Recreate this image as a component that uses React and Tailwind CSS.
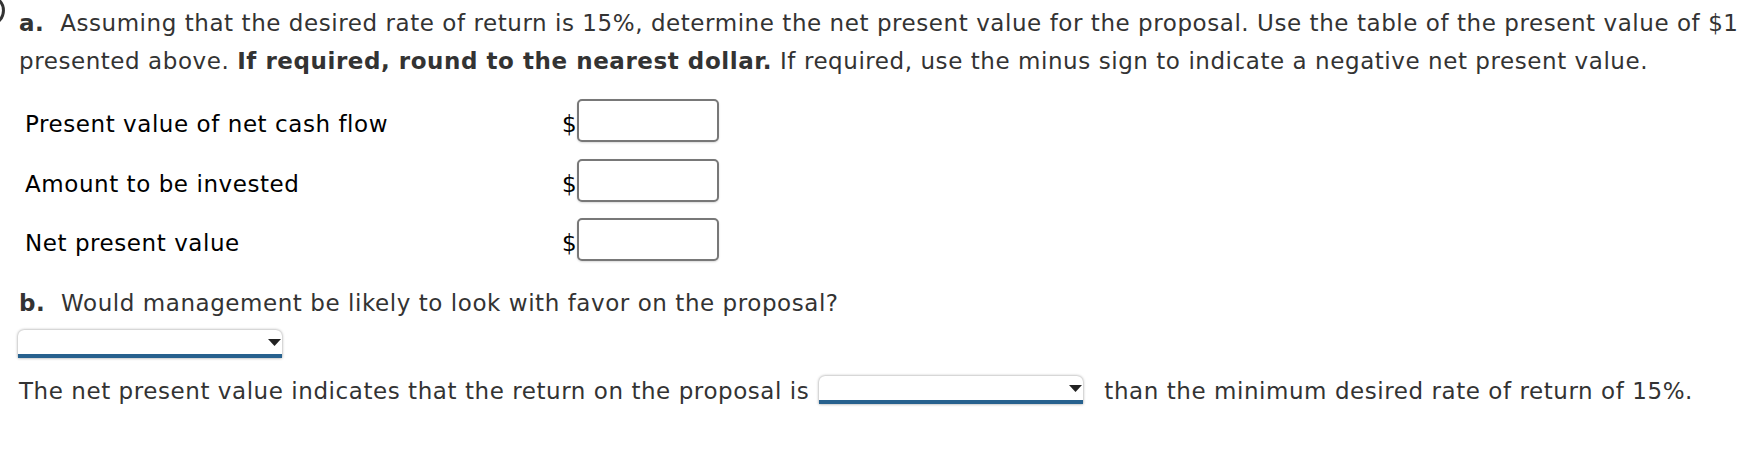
import React from 'react';

const Select = ({ className = '' }) => (
    <div className={`relative w-[264px] h-[28px] bg-white rounded-t-[6px] border-b-4 border-[#27618e] shadow-[0_0_3px_rgba(0,0,0,0.45)] ${className}`}>
        {/* dropdown caret */}
        <svg className="absolute right-[1px] top-[9px]" width="13" height="7" viewBox="0 0 13 7">
            <path d="M0 0 L13 0 L6.5 7 Z" fill="#222" />
        </svg>
    </div>
);

const AmountRow = ({ label }) => (
    <div className="flex items-center h-[43px]">
        <span className="w-[543px] pl-[6px] pt-[8px] text-black">{label}</span>
        <span className="pt-[8px] text-black">$</span>
        <div className="w-[142px] h-[43px] border-2 border-[#787878] rounded-[5px] bg-white shadow-[0_1px_2px_rgba(0,0,0,0.15)]"></div>
    </div>
);

export default function App() {
    return (
        <div className="relative w-[1762px] h-[466px] bg-white overflow-hidden font-['DejaVu_Sans','Liberation_Sans',sans-serif] text-[23px] tracking-[0.56px] text-[#333]">
            {/* edge of the question marker */}
            <svg className="absolute left-0 top-0" width="8" height="28" viewBox="0 0 8 28">
                <path d="M-9 -3 A 12 13 0 0 1 -9 24" fill="none" stroke="#333" strokeWidth="3" />
            </svg>

            <div className="pl-[19px] pr-[10px] pt-[4px]">
                {/* Part a */}
                <p className="leading-[38px]">
                    <b className="font-bold">a.</b>&nbsp; Assuming that the desired rate of return is 15%, determine the net present value for the proposal. Use the table of the present value of $1 presented above. <b className="font-bold">If required, round to the nearest dollar.</b> If required, use the minus sign to indicate a negative net present value.
                </p>

                <div className="mt-[19px] flex flex-col gap-[16.5px]">
                    <AmountRow label="Present value of net cash flow" />
                    <AmountRow label="Amount to be invested" />
                    <AmountRow label="Net present value" />
                </div>

                {/* Part b */}
                <p className="mt-[22px] leading-[40px]">
                    <b className="font-bold">b.</b>&nbsp; Would management be likely to look with favor on the proposal?
                </p>

                <Select className="mt-[7px] -ml-[1px]" />

                <div className="mt-[13px] flex items-start">
                    <span className="leading-[40px]">The net present value indicates that the return on the proposal is</span>
                    <Select className="mt-[5px] ml-[10px] shrink-0" />
                    <span className="leading-[40px] ml-[21px]">than the minimum desired rate of return of 15%.</span>
                </div>
            </div>
        </div>
    );
}
